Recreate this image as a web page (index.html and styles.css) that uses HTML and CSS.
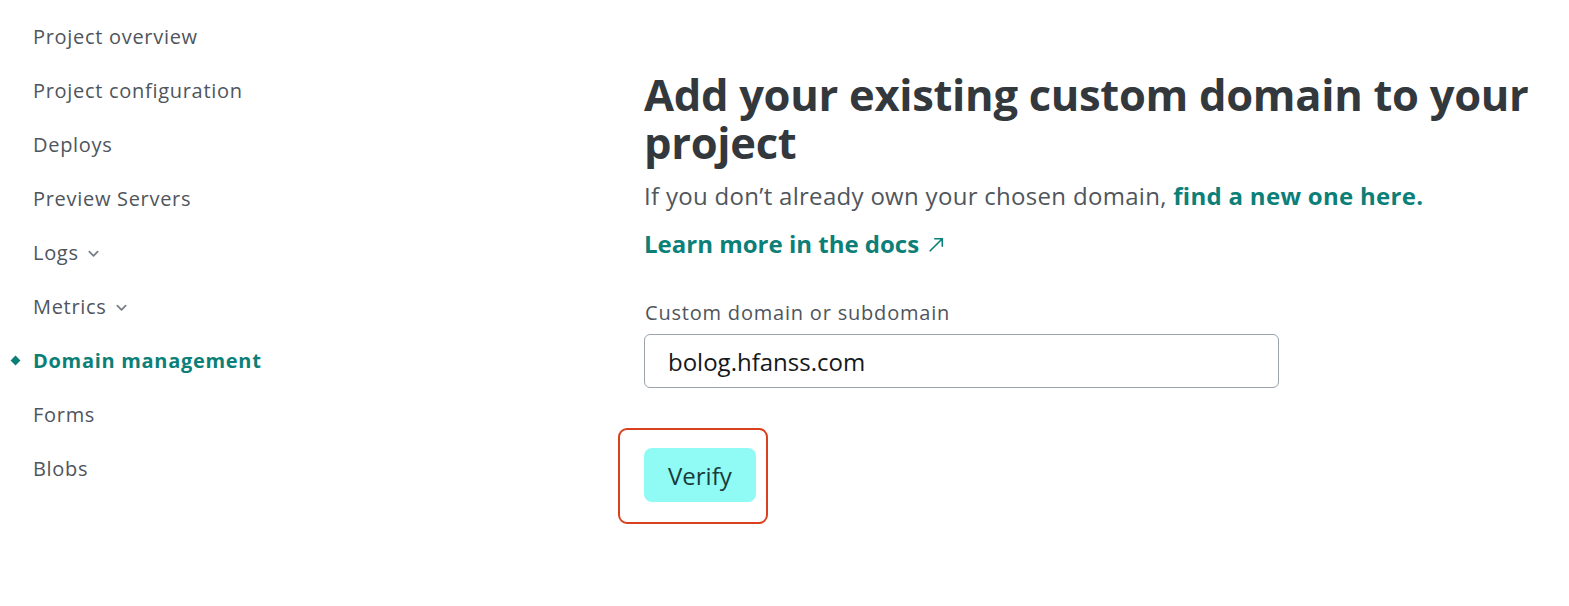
FILE: index.html
```html
<!DOCTYPE html>
<html lang="en">
<head>
<meta charset="utf-8">
<title>Domain management</title>
<link rel="stylesheet" href="styles.css">
</head>
<body>
<div class="layout">
  <nav class="sidebar">
    <ul class="nav-list">
      <li class="nav-item">Project overview</li>
      <li class="nav-item">Project configuration</li>
      <li class="nav-item">Deploys</li>
      <li class="nav-item">Preview Servers</li>
      <li class="nav-item">Logs <svg class="chevron" viewBox="0 0 12 8" width="12" height="8"><path d="M1.5 1.5 L6 6 L10.5 1.5" fill="none" stroke="currentColor" stroke-width="2" stroke-linecap="round" stroke-linejoin="round"/></svg></li>
      <li class="nav-item">Metrics <svg class="chevron" viewBox="0 0 12 8" width="12" height="8"><path d="M1.5 1.5 L6 6 L10.5 1.5" fill="none" stroke="currentColor" stroke-width="2" stroke-linecap="round" stroke-linejoin="round"/></svg></li>
      <li class="nav-item active"><span class="diamond"></span>Domain management</li>
      <li class="nav-item">Forms</li>
      <li class="nav-item">Blobs</li>
    </ul>
  </nav>
  <main class="content">
    <h1 class="title">Add your existing custom domain to your project</h1>
    <p class="lead">If you don’t already own your chosen domain, <a class="link" href="#">find a new one here.</a></p>
    <p class="docs"><a class="link" href="#">Learn more in the docs <svg class="arrow" viewBox="0 0 20 20" width="20" height="20"><path d="M3 17 L17 3 M8 3 H17 V12" fill="none" stroke="currentColor" stroke-width="1.8"/></svg></a></p>
    <form class="form">
      <label class="label" for="domain">Custom domain or subdomain</label>
      <input class="input" id="domain" type="text" value="bolog.hfanss.com">
      <div class="highlight">
        <button class="btn" type="button">Verify</button>
      </div>
    </form>
  </main>
</div>
</body>
</html>
```

FILE: styles.css
```css
* { box-sizing: border-box; }
html, body { margin: 0; padding: 0; background: #fff; }
body {
  font-family: "Open Sans", "Noto Sans", sans-serif;
  color: #545a61;
}
.layout {
  display: grid;
  grid-template-columns: 644px 1fr;
}
.sidebar { padding: 10px 0 0 33px; }
.nav-list { list-style: none; margin: 0; padding: 0; }
.nav-item {
  position: relative;
  display: flex;
  align-items: center;
  gap: 9px;
  font-size: 20px;
  line-height: 30px;
  padding: 12px 0;
  color: #4f555c;
  letter-spacing: 0.7px;
}
.chevron { color: #7a8087; margin-top: 2px; width: 11px; height: 8px; }
.nav-item.active { color: #0b7f78; font-weight: 700; }
.diamond {
  position: absolute;
  left: -21px;
  top: 23px;
  width: 7px;
  height: 7px;
  background: #0b7f78;
  transform: rotate(45deg);
}
.content { padding: 71px 20px 0 0; max-width: 925px; }
.title {
  margin: 0;
  font-size: 43.5px;
  line-height: 48px;
  font-weight: 700;
  color: #33383d;
  letter-spacing: -0.3px;
}
.lead {
  margin: 11px 0 0;
  font-size: 24px;
  line-height: 36px;
  color: #50565c;
  letter-spacing: 0.3px;
}
.link { color: #0b7f78; font-weight: 700; text-decoration: none; }
.docs { margin: 12px 0 0; font-size: 24px; line-height: 36px; letter-spacing: 0; }
.arrow { width: 18px; height: 18px; vertical-align: -1px; margin-left: 2px; }
.form { margin-top: 37px; display: flex; flex-direction: column; align-items: flex-start; }
.label { font-size: 20px; line-height: 28px; color: #4f555c; padding-left: 1px; letter-spacing: 0.8px; }
.input {
  margin-top: 7px;
  width: 635px;
  height: 54px;
  border: 1px solid #9aa2ab;
  border-radius: 6px;
  padding: 0 23px;
  font-family: inherit;
  font-size: 24px;
  color: #15181b;
  outline: none;
}
.highlight {
  margin: 40px 0 0 -26px;
  padding: 18px 10px 20px 24px;
  border: 2.5px solid #d9411e;
  border-radius: 9px;
}
.btn {
  display: block;
  height: 54px;
  padding: 0 24px;
  border: none;
  border-radius: 8px;
  background: #8ffbf4;
  color: #183b3b;
  font-family: inherit;
  font-size: 24px;
}
```
